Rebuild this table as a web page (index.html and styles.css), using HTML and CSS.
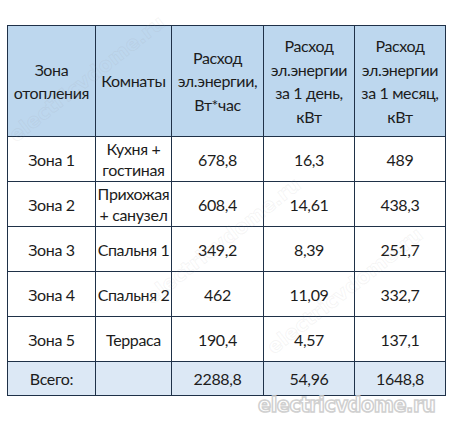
FILE: index.html
```html
<!DOCTYPE html>
<html lang="ru">
<head>
<meta charset="utf-8">
<link rel="stylesheet" href="styles.css">
</head>
<body>
<div class="page">
  <table class="data">
    <colgroup>
      <col class="c1"><col class="c2"><col class="c3"><col class="c4"><col class="c5">
    </colgroup>
    <thead>
      <tr class="head">
        <th>Зона<br>отопления</th>
        <th>Комнаты</th>
        <th>Расход<br>эл.энергии,<br>Вт*час</th>
        <th>Расход<br>эл.энергии<br>за 1 день,<br>кВт</th>
        <th>Расход<br>эл.энергии<br>за 1 месяц,<br>кВт</th>
      </tr>
    </thead>
    <tbody>
      <tr><td>Зона 1</td><td>Кухня +<br>гостиная</td><td>678,8</td><td>16,3</td><td>489</td></tr>
      <tr><td>Зона 2</td><td>Прихожая<br>+ санузел</td><td>608,4</td><td>14,61</td><td>438,3</td></tr>
      <tr><td>Зона 3</td><td>Спальня 1</td><td>349,2</td><td>8,39</td><td>251,7</td></tr>
      <tr><td>Зона 4</td><td>Спальня 2</td><td>462</td><td>11,09</td><td>332,7</td></tr>
      <tr><td>Зона 5</td><td>Терраса</td><td>190,4</td><td>4,57</td><td>137,1</td></tr>
      <tr class="total"><td>Всего:</td><td></td><td>2288,8</td><td>54,96</td><td>1648,8</td></tr>
    </tbody>
  </table>
  <div class="mark">electricvdome.ru</div>
  <div class="wm wm1">electricvdome.ru</div>
  <div class="wm wm2">electricvdome.ru</div>
  <div class="wm wm4">electricvdome.ru</div>
</div>
</body>
</html>
```
FILE: styles.css
```css
html, body {
  margin: 0;
  padding: 0;
  background: #ffffff;
}
.page {
  position: relative;
  width: 450px;
  height: 425px;
  overflow: hidden;
  padding: 25px 0 0 7px;
  box-sizing: border-box;
  font-family: "Lato", "Noto Sans", sans-serif;
  color: #1c1c1c;
}
.data {
  border-collapse: collapse;
  table-layout: fixed;
  width: 438px;
  font-size: 16px;
  letter-spacing: -0.35px;
}
.c1 { width: 88px; }
.c2 { width: 76px; }
.c3 { width: 92px; }
.c4 { width: 91px; }
.c5 { width: 91px; }
.data th, .data td {
  border: 1px solid #1f3148;
  text-align: center;
  vertical-align: middle;
  padding: 0;
  font-weight: normal;
  white-space: nowrap;
}
.head th {
  background: #bdd7ee;
  height: 110px;
  line-height: 23.5px;
}
.data td {
  height: 44px;
  line-height: 21px;
}
.total td {
  background: #dce8f5;
  height: 33px;
}
.mark {
  position: absolute;
  left: 258px;
  top: 393px;
  font-family: "DejaVu Sans", sans-serif;
  font-weight: bold;
  font-size: 21px;
  letter-spacing: -0.5px;
  color: #ffffff;
  -webkit-text-stroke: 1.6px #d0d0d0;
  transform: scaleX(0.92);
  transform-origin: left top;
}
.wm {
  position: absolute;
  font-family: "DejaVu Sans", sans-serif;
  font-weight: bold;
  font-size: 20px;
  color: transparent;
  -webkit-text-stroke: 1px rgba(150, 150, 150, 0.1);
  transform-origin: left top;
  transform: rotate(-38deg);
  white-space: nowrap;
  pointer-events: none;
}
.wm1 { left: 4px; top: 128px; }
.wm2 { left: 140px; top: 290px; }
.wm4 { left: 262px; top: 340px; }
```
